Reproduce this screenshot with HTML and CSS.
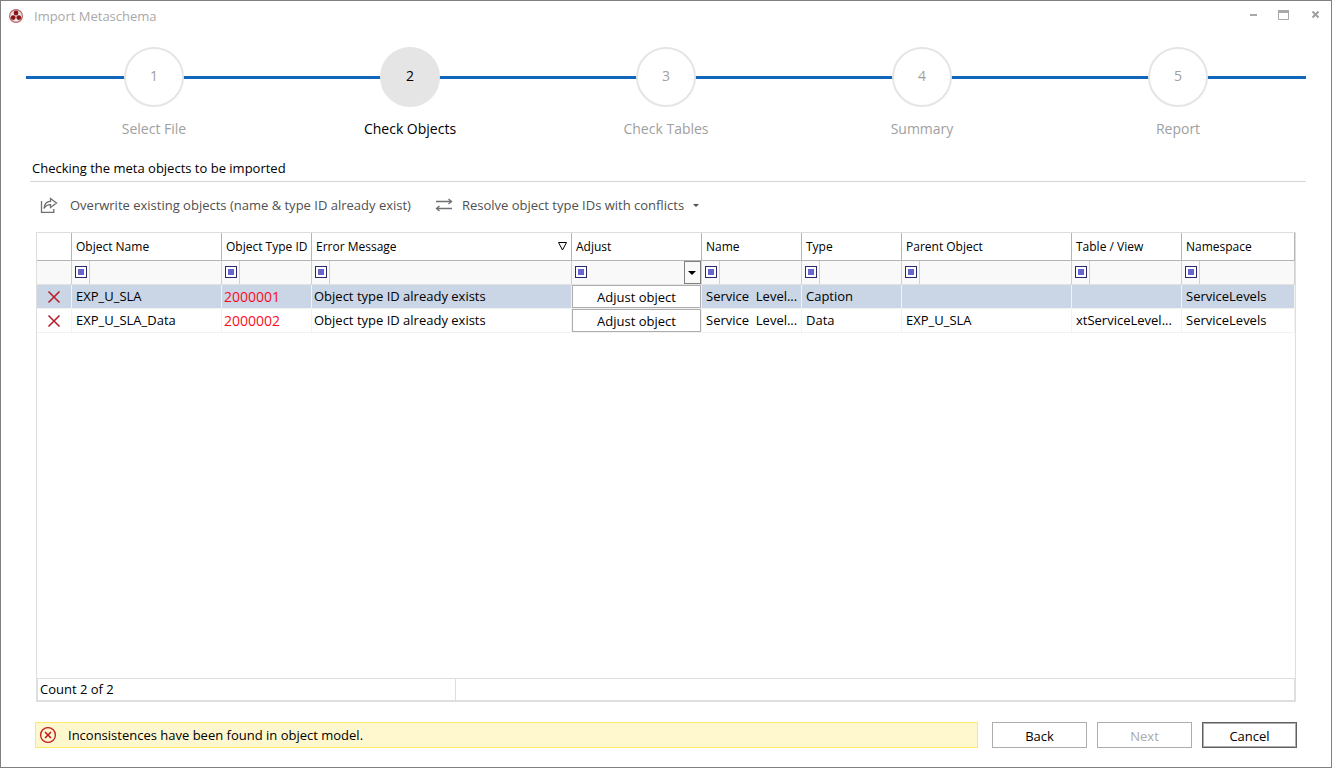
FILE: index.html
```
<!DOCTYPE html>
<html lang="en">
<head>
  <meta charset="utf-8">
  <title>Import Metaschema</title>
  <link rel="stylesheet" href="styles.css">
</head>
<body>
  <div class="window">
    <header class="titlebar">
      <svg class="app-icon" width="14" height="14" viewBox="0 0 14 14">
        <circle cx="7" cy="7" r="6.4" fill="#e9e6e8" stroke="#b8676b" stroke-width="1.2"/>
        <circle cx="7" cy="4" r="2.4" fill="#8e1216"/>
        <circle cx="4.2" cy="8.6" r="2.4" fill="#8e1216"/>
        <circle cx="9.8" cy="8.6" r="2.4" fill="#8e1216"/>
      </svg>
      <span class="title">Import Metaschema</span>
      <div class="controls">
        <button type="button" aria-label="Minimize"><svg width="11" height="10"><path d="M4 5h7" stroke="#a9a9a9" stroke-width="2"/></svg></button>
        <button type="button" aria-label="Maximize"><svg width="11" height="10"><path d="M.5 .5h10v9h-10z" fill="none" stroke="#a9a9a9"/><path d="M0 1.5h11" stroke="#a9a9a9" stroke-width="3"/></svg></button>
        <button type="button" aria-label="Close"><svg width="11" height="10"><path d="M2.5 1.5l6 6M8.5 1.5l-6 6" stroke="#a0a0a0" stroke-width="2"/></svg></button>
      </div>
    </header>

    <ol class="steps">
      <li><span class="circle">1</span><span class="label">Select File</span></li>
      <li class="active"><span class="circle">2</span><span class="label">Check Objects</span></li>
      <li><span class="circle">3</span><span class="label">Check Tables</span></li>
      <li><span class="circle">4</span><span class="label">Summary</span></li>
      <li><span class="circle">5</span><span class="label">Report</span></li>
    </ol>

    <h1 class="heading">Checking the meta objects to be imported</h1>

    <div class="toolbar">
      <button type="button">
        <svg width="18" height="18" viewBox="0 0 18 18" fill="none" stroke="#707070" stroke-width="1.3">
          <path d="M1.5 5v11.3h12.3V13"/>
          <path d="M4 12.5C4.3 8 6.5 5.500 10.500 5.300V2.500L16.500 7l-6 4.500V8.700C7.500 8.700 5.500 10 4 12.500z"/>
        </svg>
        <span>Overwrite existing objects (name &amp; type ID already exist)</span>
      </button>
      <button type="button">
        <svg width="18" height="18" viewBox="0 0 18 18" fill="none" stroke="#707070" stroke-width="1.3">
          <path d="M1 5.500h15.500M13.500 3l3 2.500-3 2.500M17 12.500H1.500M4.500 10l-3 2.500 3 2.500"/>
        </svg>
        <span>Resolve object type IDs with conflicts</span>
        <i class="arrow"></i>
      </button>
    </div>

    <div class="grid">
      <table>
        <colgroup>
          <col class="c-icon"><col class="c-object"><col class="c-id"><col><col class="c-adjust">
          <col class="c-name"><col class="c-type"><col class="c-parent"><col class="c-table"><col class="c-space">
        </colgroup>
        <thead>
          <tr>
            <th></th>
            <th>Object Name</th>
            <th>Object Type ID</th>
            <th>
              <div class="sorted">Error Message
                <svg width="9" height="9" viewBox="0 0 9 9"><path d="M.5 .5h8l-4 7.500z" fill="none" stroke="#000"/></svg>
              </div>
            </th>
            <th>Adjust</th>
            <th>Name</th>
            <th>Type</th>
            <th>Parent Object</th>
            <th>Table / View</th>
            <th>Namespace</th>
          </tr>
          <tr class="filters">
            <td></td>
            <td><div class="filter"><button type="button" aria-label="Filter operator"></button><input type="text" aria-label="Object Name filter"></div></td>
            <td><div class="filter"><button type="button" aria-label="Filter operator"></button><input type="text" aria-label="Object Type ID filter"></div></td>
            <td><div class="filter"><button type="button" aria-label="Filter operator"></button><input type="text" aria-label="Error Message filter"></div></td>
            <td>
              <div class="filter list">
                <button type="button" aria-label="Filter operator"></button>
                <div class="drop">
                  <select aria-label="Adjust filter"><option></option></select>
                  <i class="arrow"></i>
                </div>
              </div>
            </td>
            <td><div class="filter"><button type="button" aria-label="Filter operator"></button><input type="text" aria-label="Name filter"></div></td>
            <td><div class="filter"><button type="button" aria-label="Filter operator"></button><input type="text" aria-label="Type filter"></div></td>
            <td><div class="filter"><button type="button" aria-label="Filter operator"></button><input type="text" aria-label="Parent Object filter"></div></td>
            <td><div class="filter"><button type="button" aria-label="Filter operator"></button><input type="text" aria-label="Table / View filter"></div></td>
            <td><div class="filter"><button type="button" aria-label="Filter operator"></button><input type="text" aria-label="Namespace filter"></div></td>
          </tr>
        </thead>
        <tbody>
          <tr class="selected">
            <td class="status"><svg width="14" height="14"><path d="M1.500 1.500l11 11M12.500 1.500l-11 11" stroke="#b5202a" stroke-width="1.600"/></svg></td>
            <td>EXP_U_SLA</td>
            <td class="id">2000001</td>
            <td class="message">Object type ID already exists</td>
            <td class="action"><button type="button">Adjust object</button></td>
            <td>Service  Level...</td>
            <td>Caption</td>
            <td></td>
            <td></td>
            <td>ServiceLevels</td>
          </tr>
          <tr>
            <td class="status"><svg width="14" height="14"><path d="M1.500 1.500l11 11M12.500 1.500l-11 11" stroke="#b5202a" stroke-width="1.600"/></svg></td>
            <td>EXP_U_SLA_Data</td>
            <td class="id">2000002</td>
            <td class="message">Object type ID already exists</td>
            <td class="action"><button type="button">Adjust object</button></td>
            <td>Service  Level...</td>
            <td>Data</td>
            <td>EXP_U_SLA</td>
            <td>xtServiceLevel...</td>
            <td>ServiceLevels</td>
          </tr>
        </tbody>
      </table>
      <div class="summary">
        <div class="count">Count 2 of 2</div>
      </div>
    </div>

    <footer class="footer">
      <div class="alert">
        <svg width="18" height="18" viewBox="0 0 18 18" fill="none" stroke="#bb1a1f">
          <circle cx="9" cy="9" r="7.400" stroke-width="1.300"/>
          <path d="M6 6l6 6M12 6l-6 6" stroke-width="1.600"/>
        </svg>
        <span>Inconsistences have been found in object model.</span>
      </div>
      <div class="buttons">
        <button type="button">Back</button>
        <button type="button" disabled>Next</button>
        <button type="button" class="cancel">Cancel</button>
      </div>
    </footer>
  </div>
</body>
</html>
```
FILE: styles.css
```
* {
  box-sizing: border-box;
}
body {
  margin: 0;
  font-family: "Open Sans", "Noto Sans", sans-serif;
  font-size: 13px;
  line-height: 18px;
  color: #000;
  background-color: #fff;
}
button, input, select {
  font: inherit;
  color: inherit;
  margin: 0;
  padding: 0;
  border: none;
  background: none;
}
svg {
  display: block;
  flex: none;
}
.window {
  display: flex;
  flex-direction: column;
  min-height: 100vh;
  border: 1px solid #808080;
}

/* title bar */
.titlebar {
  display: flex;
  align-items: center;
  height: 30px;
  padding: 0 10px 0 8px;
}
.title {
  margin-left: 11px;
  color: #a9a9a9;
}
.controls {
  display: flex;
  gap: 21px;
  margin-left: auto;
  padding-bottom: 2px;
}

/* wizard steps */
.steps {
  display: flex;
  margin: 0;
  padding: 16px 25px 0;
  list-style: none;
  font-size: 14px;
  color: #a0a0a0;
}
.steps li {
  position: relative;
  flex: 1;
  display: flex;
  flex-direction: column;
  align-items: center;
}
.steps li::before {
  content: "";
  position: absolute;
  top: 29px;
  left: 0;
  right: 0;
  height: 3px;
  background-color: #1067bb;
}
.circle {
  position: relative;
  width: 60px;
  height: 60px;
  border: 2px solid #e5e5e5;
  border-radius: 50%;
  background-color: #fff;
  line-height: 54px;
  text-align: center;
}
.label {
  margin-top: 13px;
}
.steps .active {
  color: #000;
}
.active .circle {
  background-color: #e5e5e5;
}

.heading {
  margin: 21px 25px 0 29px;
  padding: 0 2px 4px;
  border-bottom: 1px solid #d5d5d5;
  font-size: 13px;
  font-weight: normal;
}

/* toolbar */
.toolbar {
  display: flex;
  gap: 24px;
  padding: 14px 39px 18px;
  color: #505050;
}
.toolbar button {
  display: flex;
  align-items: center;
  gap: 9px;
}
.toolbar svg + span {
  margin-left: 3px;
}
.toolbar button + button svg + span {
  margin-left: 0;
}
.arrow {
  border: 4px solid transparent;
  border-top-color: currentColor;
  border-bottom: none;
}
.toolbar .arrow {
  border-width: 3px 3px 0;
}

/* grid */
.grid {
  flex: 1;
  display: flex;
  flex-direction: column;
  margin: 0 35px;
  border: 1px solid #dedede;
}
table {
  width: 100%;
  table-layout: fixed;
  border-spacing: 0;
}
.c-icon { width: 35px; }
.c-object { width: 150px; }
.c-id { width: 90px; }
.c-adjust { width: 130px; }
.c-name, .c-type { width: 100px; }
.c-parent { width: 170px; }
.c-table { width: 110px; }
.c-space { width: 113px; }
th {
  height: 28px;
  padding: 0 4px;
  border-right: 1px solid #b5b5b5;
  border-bottom: 1px solid #b5b5b5;
  font-size: 12px;
  font-weight: normal;
  text-align: left;
  white-space: nowrap;
}
td {
  height: 24px;
  padding: 0 0 2px 4px;
  border-right: 1px solid #f2f2f2;
  border-bottom: 1px solid #f2f2f2;
  overflow: hidden;
}
tbody td {
  white-space: pre;
}
.sorted {
  display: flex;
  justify-content: space-between;
  align-items: center;
}
.filters td {
  padding: 0;
  border-right-color: #d0d0d0;
  border-bottom-color: #e4e4e4;
  background-color: #f9f9f9;
}
.filter {
  display: flex;
  height: 23px;
}
.filter > button {
  flex: none;
  width: 12px;
  height: 12px;
  margin: 5px 2px 0 3px;
  border: 1px solid #29296b;
  background-color: #6666cc;
  box-shadow: inset 0 0 0 2px #fff;
}
.filter input {
  flex: 1;
  min-width: 0;
  border-left: 1px solid #d0d0d0;
}
.list {
  justify-content: space-between;
}
.drop {
  position: relative;
  width: 17px;
}
.drop select {
  width: 100%;
  height: 100%;
  border: 1px solid #808080;
  border-radius: 0;
  appearance: none;
}
.drop .arrow {
  position: absolute;
  top: 10px;
  left: 4px;
  pointer-events: none;
}
.selected td {
  background-color: #cad5e6;
}
td.status {
  padding: 0 0 0 10px;
}
td.id {
  padding: 0 0 0 2px;
  color: #ff0a1e;
  font-size: 14px;
}
td.message {
  padding-left: 2px;
}
td.action {
  padding: 0;
}
.action button {
  display: block;
  width: 100%;
  height: 23px;
  border: 1px solid #adadad;
  background-color: #fff;
}
.summary {
  margin-top: auto;
  border: 1px solid #dedede;
}
.count {
  width: 418px;
  height: 21px;
  padding: 1px 2px;
  border-right: 1px solid #dedede;
}

/* footer */
.footer {
  display: flex;
  gap: 14px;
  padding: 20px 34px 19px;
}
.alert {
  flex: 1;
  display: flex;
  align-items: center;
  gap: 11px;
  padding: 0 3px;
  border: 1px solid #fdea6a;
  background-color: #fff8ce;
}
.buttons {
  display: flex;
  gap: 10px;
}
.buttons button {
  width: 95px;
  height: 26px;
  padding-top: 2px;
  border: 1px solid #adadad;
}
.buttons button:disabled {
  color: #a9a9a9;
}
.buttons .cancel {
  border-color: #606060;
  box-shadow: inset 0 0 0 1px #adadad;
}
```
